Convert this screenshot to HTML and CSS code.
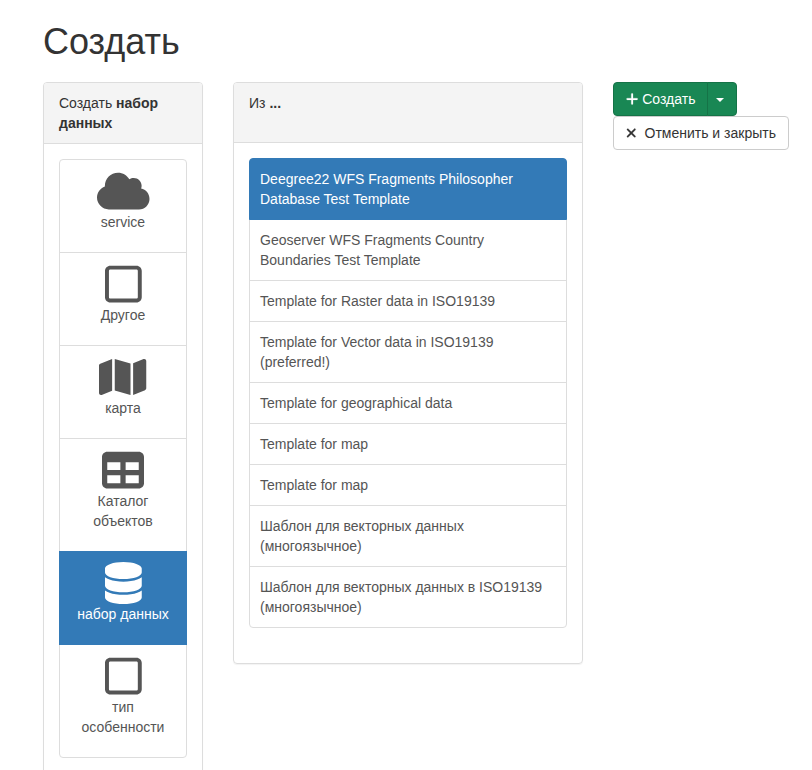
FILE: index.html
```html
<!DOCTYPE html>
<html lang="ru">
<head>
<meta charset="utf-8">
<title>Создать</title>
<link rel="stylesheet" href="styles.css">
</head>
<body>
<main class="page">
  <h1>Создать</h1>
  <div class="columns">
    <section class="panel panel-types">
      <div class="panel-heading">Создать <strong>набор данных</strong></div>
      <div class="panel-body">
        <div class="list types">
          <a class="item"><svg class="icon" viewBox="0 0 640 512" width="52.5"><path d="M0 336c0 79.5 64.5 144 144 144H512c70.7 0 128-57.3 128-128c0-61.9-44-113.6-102.4-125.4c4.1-10.7 6.4-22.4 6.4-34.6c0-53-43-96-96-96c-19.7 0-38.1 6-53.3 16.2C367 64.2 315.3 32 256 32C167.6 32 96 103.6 96 192c0 2.7 .1 5.4 .2 8.1C40.2 219.8 0 273.2 0 336z"/></svg>service</a>
          <a class="item"><svg class="icon" viewBox="0 0 448 512" width="36.75"><path d="M384 80c8.8 0 16 7.2 16 16V416c0 8.8-7.2 16-16 16H64c-8.8 0-16-7.2-16-16V96c0-8.8 7.2-16 16-16H384zM64 32C28.7 32 0 60.7 0 96V416c0 35.3 28.7 64 64 64H384c35.3 0 64-28.7 64-64V96c0-35.3-28.7-64-64-64H64z"/></svg>Другое</a>
          <a class="item"><svg class="icon" viewBox="0 0 576 512" width="47.25"><path d="M384 476.1L192 421.2V35.9L384 90.8V476.1zm32-1.2V88.4L543.1 37.5c15.8-6.3 32.9 5.3 32.9 22.3V394.6c0 9.8-6 18.6-15.1 22.3L416 474.8zM15.1 95.1L160 37.2V423.6L32.9 474.5C17.1 480.8 0 469.2 0 452.2V117.4c0-9.8 6-18.6 15.1-22.3z"/></svg>карта</a>
          <a class="item"><svg class="icon" viewBox="0 0 512 512" width="42"><path d="M64 256V160H224v96H64zm0 64H224v96H64V320zm224 96V320H448v96H288zM448 256H288V160H448v96zM64 32C28.7 32 0 60.7 0 96V416c0 35.3 28.7 64 64 64H448c35.3 0 64-28.7 64-64V96c0-35.3-28.7-64-64-64H64z"/></svg>Каталог объектов</a>
          <a class="item active"><svg class="icon" viewBox="0 0 448 512" width="36.75"><path d="M448 80v48c0 44.2-100.3 80-224 80S0 172.2 0 128V80C0 35.8 100.3 0 224 0S448 35.8 448 80zM393.2 214.7c20.8-7.4 39.9-16.9 54.8-28.6V288c0 44.2-100.3 80-224 80S0 332.2 0 288V186.1c14.9 11.8 34 21.2 54.8 28.6C99.7 230.7 159.5 240 224 240s124.3-9.3 169.2-25.3zM0 346.1c14.9 11.8 34 21.2 54.8 28.6C99.7 390.7 159.5 400 224 400s124.3-9.3 169.2-25.3c20.8-7.4 39.9-16.9 54.8-28.6V432c0 44.2-100.3 80-224 80S0 476.2 0 432V346.1z"/></svg>набор данных</a>
          <a class="item"><svg class="icon" viewBox="0 0 448 512" width="36.75"><path d="M384 80c8.8 0 16 7.2 16 16V416c0 8.8-7.2 16-16 16H64c-8.8 0-16-7.2-16-16V96c0-8.8 7.2-16 16-16H384zM64 32C28.7 32 0 60.7 0 96V416c0 35.3 28.7 64 64 64H384c35.3 0 64-28.7 64-64V96c0-35.3-28.7-64-64-64H64z"/></svg>тип особенности</a>
        </div>
      </div>
    </section>
    <section class="panel panel-templates">
      <div class="panel-heading">Из <strong>...</strong></div>
      <div class="panel-body">
        <div class="list">
          <a class="item active">Deegree22 WFS Fragments Philosopher Database Test Template</a>
          <a class="item">Geoserver WFS Fragments Country Boundaries Test Template</a>
          <a class="item">Template for Raster data in ISO19139</a>
          <a class="item">Template for Vector data in ISO19139 (preferred!)</a>
          <a class="item">Template for geographical data</a>
          <a class="item">Template for map</a>
          <a class="item">Template for map</a>
          <a class="item">Шаблон для векторных данных (многоязычное)</a>
          <a class="item">Шаблон для векторных данных в ISO19139 (многоязычное)</a>
        </div>
      </div>
    </section>
    <div class="actions">
      <div class="btn-group">
        <button class="btn btn-success"><svg class="glyph" viewBox="0 0 448 512" width="12.25" height="14"><path d="M256 80c0-17.7-14.3-32-32-32s-32 14.3-32 32V224H48c-17.7 0-32 14.3-32 32s14.3 32 32 32H192V432c0 17.7 14.3 32 32 32s32-14.3 32-32V288H400c17.7 0 32-14.3 32-32s-14.3-32-32-32H256V80z"/></svg>Создать</button>
        <button class="btn btn-success btn-toggle" aria-label="Меню"><span class="caret"></span></button>
      </div>
      <button class="btn btn-default"><svg class="glyph" viewBox="0 0 384 512" width="10.5" height="14"><path d="M342.6 150.6c12.5-12.5 12.5-32.8 0-45.3s-32.8-12.5-45.3 0L192 210.7 86.6 105.4c-12.5-12.5-32.8-12.5-45.3 0s-12.5 32.8 0 45.3L146.7 256 41.4 361.4c-12.5 12.5-12.5 32.8 0 45.3s32.8 12.5 45.3 0L192 301.3 297.4 406.6c12.5 12.5 32.8 12.5 45.3 0s12.5-32.8 0-45.3L237.3 256 342.6 150.6z"/></svg>Отменить и закрыть</button>
    </div>
  </div>
</main>
</body>
</html>
```

FILE: styles.css
```css
* { box-sizing: border-box; }

html { overflow: hidden; }

body {
  margin: 0;
  height: 770px;
  overflow: hidden;
  background: #fff;
  color: #333;
  font: 14px/20px "Liberation Sans", Arial, sans-serif;
}

.page { padding: 22px 0 0 43px; }

h1 {
  margin: 0 0 20px;
  font-size: 36px;
  line-height: 40px;
  font-weight: 400;
}

.columns {
  display: flex;
  align-items: flex-start;
  gap: 30px;
}

.panel {
  flex: none;
  border: 1px solid #ddd;
  border-radius: 4px;
  box-shadow: 0 1px 1px rgba(0, 0, 0, .05);
}

.panel-types { width: 160px; }
.panel-templates { width: 350px; }

.panel-heading {
  min-height: 61px;
  padding: 10px 15px;
  border-bottom: 1px solid #ddd;
  border-radius: 3px 3px 0 0;
  background: #f4f4f4;
}

.panel-templates .panel-heading { min-height: 60px; }

.panel-body { padding: 15px; }
.panel-templates .panel-body { padding-bottom: 35px; }

.item {
  display: block;
  position: relative;
  margin-bottom: -1px;
  padding: 10px;
  border: 1px solid #ddd;
  color: #555;
}

.item:first-child { border-radius: 4px 4px 0 0; }
.item:last-child { margin-bottom: 0; border-radius: 0 0 4px 4px; }

.item.active {
  z-index: 1;
  border-color: #337ab7;
  background: #337ab7;
  color: #fff;
}

.types .item {
  padding-bottom: 20px;
  text-align: center;
}

.icon {
  display: block;
  height: 42px;
  margin: 0 auto;
  overflow: visible;
  fill: currentColor;
}

.actions {
  display: flex;
  flex-direction: column;
  align-items: flex-start;
}

.btn-group { display: flex; }

.btn {
  display: flex;
  align-items: center;
  height: 34px;
  padding: 0 12px;
  border: 1px solid #ccc;
  border-radius: 4px;
  background: #fff;
  color: #333;
  font: inherit;
  white-space: nowrap;
}

.btn-success {
  border-color: #157347;
  border-radius: 4px 0 0 4px;
  background: #198754;
  color: #fff;
}

.btn-toggle {
  margin-left: -1px;
  padding: 0 12px 0 8px;
  border-radius: 0 4px 4px 0;
}

.glyph {
  margin-right: 4px;
  overflow: visible;
  fill: currentColor;
  stroke: currentColor;
  stroke-width: 8;
}

.btn-default .glyph { margin-right: 8px; }

.caret {
  width: 0;
  height: 0;
  margin-top: 2px;
  border: 4px solid transparent;
  border-top-color: currentColor;
  border-bottom: 0;
}
```
